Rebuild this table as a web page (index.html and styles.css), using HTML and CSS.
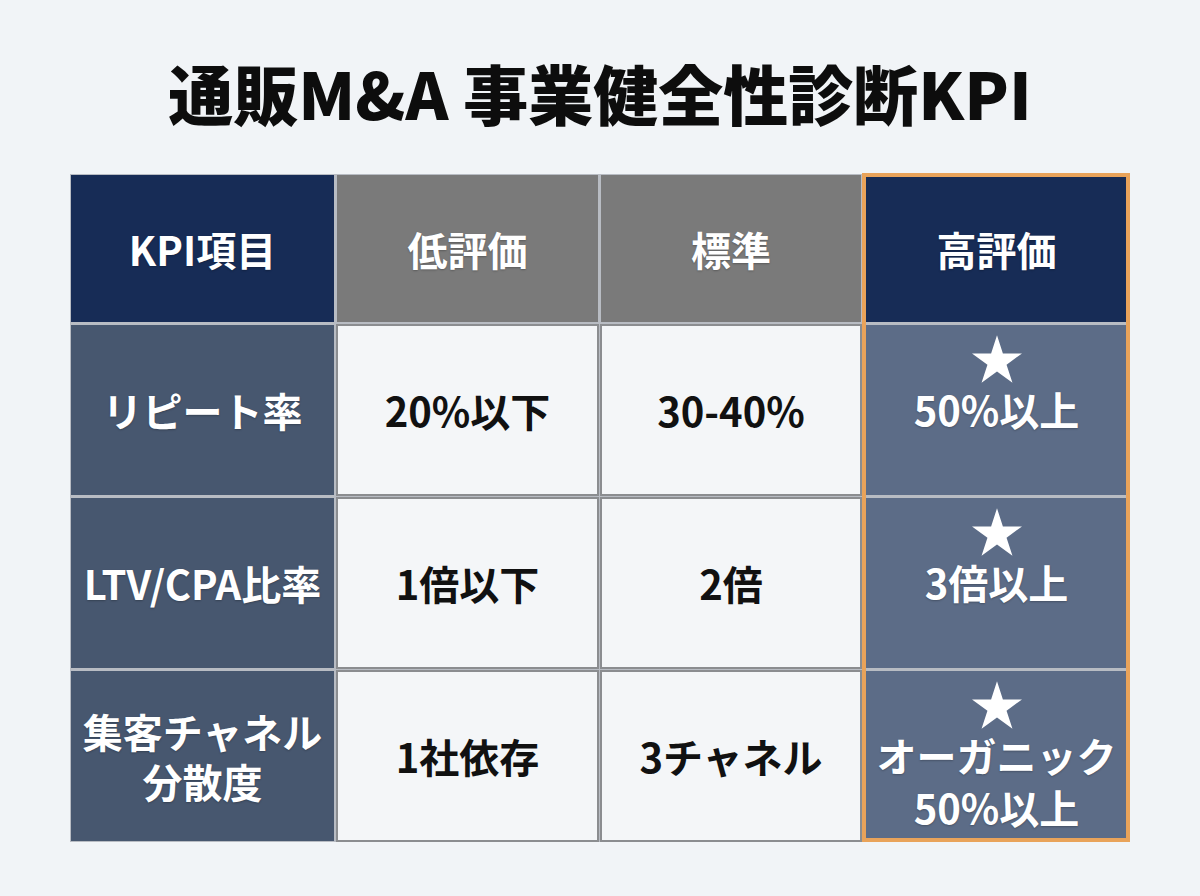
FILE: index.html
```html
<!DOCTYPE html>
<html lang="ja">
<head>
<meta charset="utf-8">
<title>通販M&amp;A 事業健全性診断KPI</title>
<link rel="stylesheet" href="styles.css">
</head>
<body>
<main class="page">
  <h1 class="title">通販M&amp;A 事業健全性診断KPI</h1>
  <div class="table">
    <div class="cell head head-navy">KPI項目</div>
    <div class="cell head head-gray">低評価</div>
    <div class="cell head head-gray">標準</div>
    <div class="cell head head-navy">高評価</div>

    <div class="cell label">リピート率</div>
    <div class="cell plain">20%以下</div>
    <div class="cell plain">30-40%</div>
    <div class="cell best">
      <svg class="star" viewBox="0 0 100 95" aria-hidden="true"><polygon points="50,0 61.8,36.3 100,36.3 69.1,58.8 80.9,95 50,72.6 19.1,95 30.9,58.8 0,36.3 38.2,36.3"/></svg>
      <span class="best-text">50%以上</span>
    </div>

    <div class="cell label">LTV/CPA比率</div>
    <div class="cell plain">1倍以下</div>
    <div class="cell plain">2倍</div>
    <div class="cell best">
      <svg class="star" viewBox="0 0 100 95" aria-hidden="true"><polygon points="50,0 61.8,36.3 100,36.3 69.1,58.8 80.9,95 50,72.6 19.1,95 30.9,58.8 0,36.3 38.2,36.3"/></svg>
      <span class="best-text">3倍以上</span>
    </div>

    <div class="cell label label-two">集客チャネル<br>分散度</div>
    <div class="cell plain">1社依存</div>
    <div class="cell plain">3チャネル</div>
    <div class="cell best">
      <svg class="star" viewBox="0 0 100 95" aria-hidden="true"><polygon points="50,0 61.8,36.3 100,36.3 69.1,58.8 80.9,95 50,72.6 19.1,95 30.9,58.8 0,36.3 38.2,36.3"/></svg>
      <span class="best-text">オーガニック<br>50%以上</span>
    </div>

    <div class="highlight" aria-hidden="true"></div>
  </div>
</main>
</body>
</html>
```

FILE: styles.css
```css
html, body {
  margin: 0;
  padding: 0;
}

body {
  background: #f1f4f7;
  font-family: "Noto Sans CJK JP", "Noto Sans", sans-serif;
  width: 1200px;
  height: 896px;
  overflow: hidden;
}

.page {
  display: flex;
  flex-direction: column;
  align-items: center;
}

.title {
  margin: 0;
  padding-top: 52px;
  font-size: 65px;
  line-height: 80px;
  font-weight: 900;
  color: #0d0d0d;
  letter-spacing: 0;
}

.table {
  position: relative;
  margin-top: 42px;
  display: grid;
  grid-template-columns: 265px 263px 262px 267px;
  grid-template-rows: 149px 172px 172px 172px;
  gap: 1px;
  background: #b8bcc3;
}

.cell {
  display: flex;
  align-items: center;
  justify-content: center;
  text-align: center;
  font-size: 40px;
  font-weight: 700;
  line-height: 50px;
}

.head {
  color: #ffffff;
  box-shadow: inset 0 0 0 1px #b8bcc3;
  text-shadow: 0 1px 2px rgba(0, 0, 0, 0.25);
}

.head-navy {
  background: #172c56;
}

.head-gray {
  background: #7a7a7a;
}

.label {
  background: #47576f;
  color: #ffffff;
  box-shadow: inset 0 0 0 1px #b8bcc3;
  text-shadow: 0 1px 2px rgba(0, 0, 0, 0.25);
}

.plain {
  background: #f4f6f8;
  color: #111111;
  box-shadow: inset 0 0 0 2px #8b8d90;
}

.best {
  background: #5c6c87;
  color: #ffffff;
  flex-direction: column;
  justify-content: flex-start;
  padding-top: 11px;
  box-shadow: inset 0 0 0 1px #b8bcc3;
  text-shadow: 0 1px 2px rgba(0, 0, 0, 0.25);
}

.star {
  display: block;
  width: 50px;
  height: 48px;
  fill: #ffffff;
}

.best-text {
  display: block;
  line-height: 52px;
}

.highlight {
  position: absolute;
  top: -1px;
  bottom: 0;
  right: 0;
  width: 268px;
  box-sizing: border-box;
  border: 4px solid #e9a35a;
  pointer-events: none;
}
```
